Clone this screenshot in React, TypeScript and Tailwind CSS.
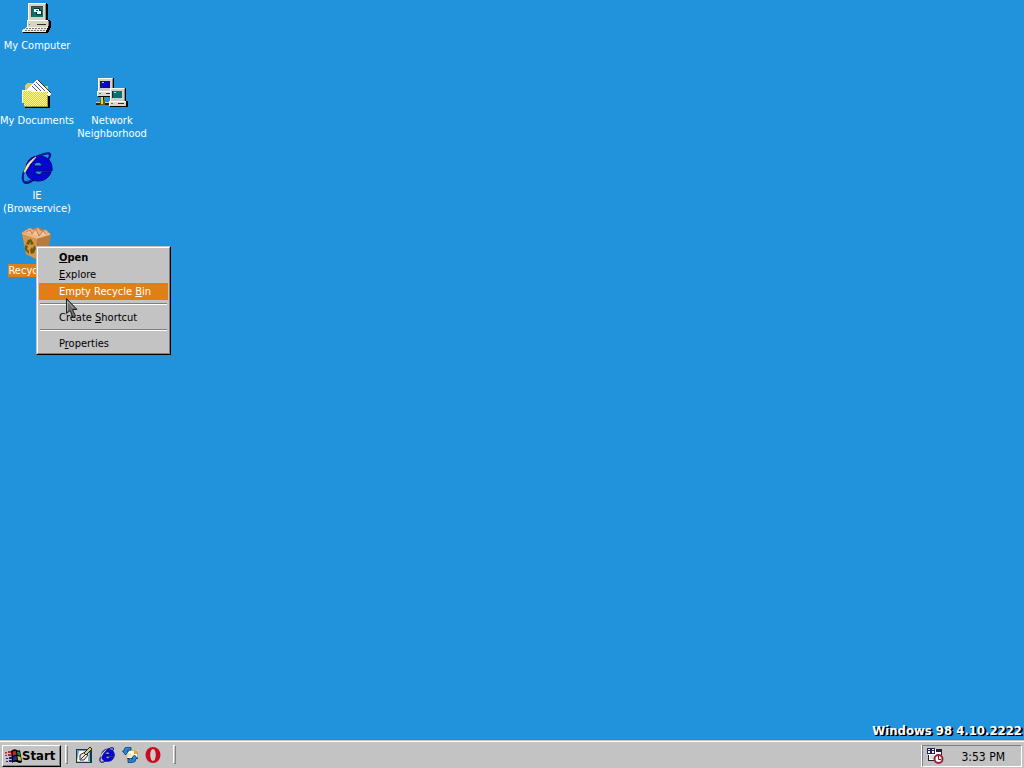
import type { ReactNode } from 'react';

const uiFont = "font-['DejaVu_Sans_Condensed','DejaVu_Sans',sans-serif]";

function ComputerIcon() {
  return (
    <svg viewBox="0 0 32 32" className="h-8 w-8" shapeRendering="crispEdges" aria-hidden="true">
      <path d="M8 1h17l2 1v16l-2 2H8z" fill="#000" />
      <path d="M7 1h17l1 1v16H7z" fill="#d8d4c0" />
      <path d="M7 1h17v1H8v16H7z" fill="#fff" />
      <path d="M24 2h1v16h-1z" fill="#908c80" />
      <path d="M10 4h12v11H10z" fill="#404040" />
      <path d="M11 5h11v10H11z" fill="#0a7070" />
      <path d="M13 6h6v4h-6zM15 8h6v5h-6z" fill="#003838" />
      <path d="M13 7h5v3h-5zM16 9h4v3h-4z" fill="#f0ffff" />
      <path d="M15 8h2v1h-2z" fill="#0a7070" />
      <path d="M6 18h22l2 2v5l-3 6H2v-3l4-3z" fill="#000" />
      <path d="M6 18h21v7H6z" fill="#d8d4c0" />
      <path d="M6 18h21v1H7v6H6z" fill="#fff" />
      <path d="M16 22h9v1h-9z" fill="#303030" />
      <path d="M8 22h1v1H8z" fill="#20a040" />
      <path d="M27 19h1v5h-1z" fill="#888" />
      <path d="M5 25h22v1h-1v2h-1v2H1v-2h1v-1h2z" fill="#f0efe8" />
      <path d="M5 26.5h20M4 28.5h20" stroke="#777" strokeDasharray="2 1" />
    </svg>
  );
}

function DocumentsIcon() {
  return (
    <svg viewBox="0 0 32 32" className="h-8 w-8" shapeRendering="crispEdges" aria-hidden="true">
      <defs>
        <pattern id="folder-dither" width="2" height="2" patternUnits="userSpaceOnUse">
          <path d="M0 0h2v2H0z" fill="#d8cc48" />
          <path d="M0 0h1v1H0zM1 1h1v1H1z" fill="#fcf890" />
        </pattern>
      </defs>
      <path d="M4 9l2-3h6l2 3h13v6H4z" fill="#d8cc70" />
      <path d="M7 13L17 2l13 14-2 4H7z" fill="#333" />
      <path d="M6 13L16 2l13 14v3H6z" fill="#fff" />
      <path d="M11 9l6 6M13 7l8 8M15 5l9 9" stroke="#4c4c9c" />
      <path d="M2 13h8l2 1h17v17H4z" fill="#000" />
      <path d="M1 13h9l2 1h15v16H3z" fill="url(#folder-dither)" />
      <path d="M1 13h9l2 1h15v1H11l-2-1H2v12H1z" fill="#fffcc8" />
      <path d="M26 15h1v15H3v-1h23z" fill="#a89838" />
      <path d="M27 14l3 3-2 2-2-1z" fill="#fff" />
    </svg>
  );
}

function SmallComputer({ x, y, screen }: { x: number; y: number; screen: string }) {
  return (
    <g transform={`translate(${x} ${y})`}>
      <path d="M2 0h14l1 1v12H2z" fill="#000" />
      <path d="M1 0h14l1 1v12H1z" fill="#d0d0c8" />
      <path d="M1 0h14v1H2v12H1z" fill="#fff" />
      <path d="M15 1h1v12h-1z" fill="#888" />
      <path d="M3 3h10v7H3z" fill="#222" />
      <path d="M4 3h9v7H4z" fill={screen} />
      <path d="M5 4h2v1H5z" fill="#a0e8f8" />
      <path d="M1 13h17l1 1v5H1z" fill="#000" />
      <path d="M0 13h17v5H0z" fill="#d8d8d0" />
      <path d="M0 13h17v1H1v4H0z" fill="#fff" />
      <path d="M2 15h2v1H2z" fill="#20a040" />
      <path d="M9 15h6v1H9z" fill="#333" />
    </g>
  );
}

function NetworkIcon() {
  return (
    <svg viewBox="0 0 32 32" className="h-8 w-8" shapeRendering="crispEdges" aria-hidden="true">
      <path d="M5 19h3v6H5zM0 26h13v2H0z" fill="#222" />
      <path d="M0 25h4v1H0zM8 25h5v1H8z" fill="#c8c8b8" />
      <path d="M4 23h5v5H4z" fill="#606018" />
      <path d="M5 20h2v7H5z" fill="#d8d840" />
      <SmallComputer x={1} y={1} screen="#0808c0" />
      <SmallComputer x={13} y={11} screen="#087070" />
    </svg>
  );
}

function BrowserIcon({ className }: { className: string }) {
  return (
    <svg viewBox="0 0 32 32" className={className} aria-hidden="true">
      <path d="M27 8Q33-1 23 2Q14 4 7 13Q-1 24 3 30Q6 33 14 27" fill="none" stroke="#081868" strokeWidth="2" />
      <path d="M18 4C9 4 5 10 5 17c0 8 5 12 12 12 6 0 11-3 13-9h-9c-1 4-7 3-7-1h17C32 10 27 4 18 4zm-5 10c0-5 8-5 8 0z" fill="#0606d4" stroke="#06066c" fillRule="evenodd" />
      <path d="M27 7Q31 0 23 2Q16 4 9 11Q0 21 2 28Q3 31 10 28" fill="none" stroke="#1414d8" strokeWidth="1" />
      <path d="M3 20Q6 10 15 5Q8 12 4 20z" fill="#fff" stroke="#e8dc50" strokeWidth="1" />
    </svg>
  );
}

function RecycleBinIcon() {
  return (
    <svg viewBox="0 0 32 32" className="h-8 w-8" aria-hidden="true">
      <path d="M1 5l7-4 4 1 4-2 5 2 5 1 4 5-4 20-11 4-10-5z" fill="#bc7b3d" />
      <path d="M2 5l7-4 3 2 5-2 3 3 5-1 4 4-11 5z" fill="#e8b087" />
      <path d="M5 5l4-2 2 4 4-5 3 7 4-5 4 4-7 2" fill="#f0c6a0" stroke="#b75e35" strokeWidth=".7" />
      <path d="M1 6l15 5-1 21-10-5z" fill="#d7944b" />
      <path d="M16 11l13-4-4 21-10 4z" fill="#b77b42" />
      <path d="M1 6l15 5 13-4" fill="none" stroke="#f0bd80" strokeWidth="1.5" />
      <path d="M7 13l3-1 3 5-3 1-1-3-1 3-3-1zM4 18l3 1-1 3 2 2v3l-4-4zM9 23l2-3 1 2 1-4 2 3-2 5-3 1z" fill="#665e0d" />
    </svg>
  );
}

function DesktopIcon({ label, children, selected = false }: { label: string; children: ReactNode; selected?: boolean }) {
  return (
    <button type="button" className="flex h-[75px] w-[75px] flex-col items-center gap-[5px] pt-0.5 pr-px text-[11px] leading-[13px] text-white">
      {children}
      <span className={selected ? 'bg-[#df8017] whitespace-nowrap' : 'whitespace-pre'}>{label}</span>
    </button>
  );
}

function MenuItem({ before = '', mark, after, bold = false, active = false }: { before?: string; mark: string; after: string; bold?: boolean; active?: boolean }) {
  return (
    <button
      type="button"
      role="menuitem"
      className={`block h-[17px] w-full pl-5 text-left leading-[17px] whitespace-nowrap ${bold ? 'font-bold' : ''} ${active ? 'bg-[#df8017] text-white' : 'text-black'}`}
    >
      {before}<span className="underline underline-offset-1">{mark}</span>{after}
    </button>
  );
}

function Separator() {
  return <div role="separator" className="mx-px mt-[3px] mb-1 h-0.5 border-t border-b border-t-[#808080] border-b-white" />;
}

function ContextMenu() {
  return (
    <div role="menu" className="absolute top-[246px] left-9 w-[135px] border border-t-[#c3c3c3] border-r-black border-b-black border-l-[#c3c3c3] text-[11px]">
      <div className="border border-t-white border-r-[#808080] border-b-[#808080] border-l-white bg-[#c3c3c3] p-px">
        <MenuItem mark="O" after="pen" bold />
        <MenuItem mark="E" after="xplore" />
        <MenuItem before="Empty Recycle " mark="B" after="in" active />
        <Separator />
        <MenuItem before="Create " mark="S" after="hortcut" />
        <Separator />
        <MenuItem before="P" mark="r" after="operties" />
      </div>
    </div>
  );
}

function Pointer() {
  return (
    <svg viewBox="0 0 13 21" className="pointer-events-none absolute top-[298px] left-[66px] h-[21px] w-[13px]" aria-hidden="true">
      <path d="M.5.5v15l3.5-3 3 7 2.5-1.5-3-6.5h4.5z" fill="#707070" stroke="#222" />
      <path d="M1.5 3v10M2 4l5 6" stroke="#aaa" />
    </svg>
  );
}

function WindowsLogo() {
  return (
    <svg viewBox="0 0 17 16" className="h-4 w-[17px] shrink-0" aria-hidden="true">
      <path d="M6 3Q9 0 12 2Q14 3 15 2L17 14Q15 16 12 14Q9 13 7 15z" fill="#000" />
      <path d="M7.500 4Q9 2.500 11 3l.5 4Q9.500 6.500 8 8z" fill="#c02030" />
      <path d="M12 3.500l2.500.2.700 4L12.500 7z" fill="#108848" />
      <path d="M8 9Q10 7.500 11.500 8l.5 4q-2-.5-3.500 1z" fill="#1830a8" />
      <path d="M12.500 8l3 .7.500 4-3-.5z" fill="#d8c830" />
      <path d="M0 4h2v1.500H0zM3 3h3v2H3zM0 7h2v1H0zM3 6h3v2H3z" fill="#b82840" />
      <path d="M1 10h2v1H1zM4 9h3v2H4zM1 13h2v1H1zM4 12h3v2H4z" fill="#202080" />
    </svg>
  );
}

function ShowDesktopIcon() {
  return (
    <svg viewBox="0 0 16 16" className="h-4 w-4" aria-hidden="true">
      <path d="M0 2h16v14H0z" fill="#183850" />
      <path d="M1 3h13v11H1z" fill="#68a0c0" />
      <path d="M3 4h10l-1 10H1z" fill="#f8f8e8" />
      <path d="M4 8l5-3 3 3-4 5H4z" fill="#e8e8e8" stroke="#333" />
      <path d="M8 6l6-6 2 2-6 6z" fill="#d8c878" stroke="#282820" />
      <path d="M5 12l4-4" stroke="#333" />
      <path d="M1 14.500h13" stroke="#d8d060" />
    </svg>
  );
}

function MailIcon() {
  return (
    <svg viewBox="0 0 16 16" className="h-4 w-4" aria-hidden="true">
      <path d="M5 3h11v8H5z" fill="#fffce8" />
      <path d="M5 11.500h11V4" fill="none" stroke="#605828" />
      <path d="M5 3.500h10M5 4v7" fill="none" stroke="#c8b868" />
      <path d="M6 9h5M6 7h3" stroke="#d8cc98" />
      <path d="M12 4h3v3h-3z" fill="#e8a828" />
      <path d="M9 .5H4Q2 .5 2 4H.5l3 4 3-4H5Q5 3 9 3z" fill="#2888e0" stroke="#083878" strokeWidth=".8" />
      <path d="M6 15.500h4q4 0 4-4h1.500L12.500 8l-3 3.500H11q0 1.500-3 1.500L6 11z" fill="#2888e0" stroke="#083878" strokeWidth=".8" />
    </svg>
  );
}

function OperaIcon() {
  return (
    <svg viewBox="0 0 16 16" className="h-4 w-4" aria-hidden="true">
      <ellipse cx="8" cy="8" rx="7.5" ry="8" fill="#c80c20" />
      <ellipse cx="8" cy="8" rx="2.8" ry="6" fill="#d0cccc" />
    </svg>
  );
}

function SchedulerIcon() {
  return (
    <svg viewBox="0 0 17 16" className="h-4 w-[17px]" aria-hidden="true">
      <path d="M1 1h14v12H1z" fill="#fff" />
      <path d="M9 1h6v3H9zM14 4h1v3h-1zM1 7h1v5h6v1H1z" fill="#222" />
      <path d="M3 8h4M3 10h4" stroke="#bbb" />
      <path d="M0 0h8v6H0z" fill="#202060" />
      <path d="M1 1h2v1H1zM5 1h2v1H5zM1 3h2v2H1zM5 3h2v2H5z" fill="#fff" />
      <circle cx="11.5" cy="11" r="4" fill="#fff" stroke="#a81838" strokeWidth="2" />
      <path d="M11.500 8v3.500H14" fill="none" stroke="#801020" />
    </svg>
  );
}

function Grip() {
  return <div className="h-[19px] w-[3px] border border-t-white border-r-[#808080] border-b-[#808080] border-l-white" />;
}

function Taskbar() {
  return (
    <footer className="flex h-7 items-center border-t border-[#c3c3c3] bg-[#c3c3c3] text-xs shadow-[inset_0_1px_0_#fff]">
      <button type="button" className="mt-0.5 ml-0.5 flex h-[22px] w-[59px] items-center border border-t-white border-r-black border-b-black border-l-white pl-0.5 text-[13px] font-bold text-black shadow-[inset_-1px_-1px_0_#808080]">
        <WindowsLogo />
        <span>Start</span>
      </button>
      <div className="ml-1 flex items-center">
        <Grip />
        <nav aria-label="Quick launch" className="mr-3 ml-2 flex items-center gap-[7px]">
          <button type="button" aria-label="Show desktop"><ShowDesktopIcon /></button>
          <button type="button" aria-label="Internet Explorer"><BrowserIcon className="h-4 w-4" /></button>
          <button type="button" aria-label="Mail"><MailIcon /></button>
          <button type="button" aria-label="Opera"><OperaIcon /></button>
        </nav>
        <Grip />
      </div>
      <div className="mt-0.5 mr-0.5 ml-auto flex h-[22px] items-center gap-[18px] border border-t-[#808080] border-r-white border-b-white border-l-[#808080] pr-4 pl-1 shadow-[-1px_0_0_#fff]">
        <SchedulerIcon />
        <time dateTime="15:53" className="pt-0.5">3:53 PM</time>
      </div>
    </footer>
  );
}

export default function App() {
  return (
    <div className={`relative flex h-screen flex-col overflow-hidden bg-[#2193dd] ${uiFont}`}>
      <main className="flex flex-1 flex-col justify-between">
        <div className="grid w-max grid-cols-2">
          <DesktopIcon label="My Computer"><ComputerIcon /></DesktopIcon>
          <span />
          <DesktopIcon label="My Documents"><DocumentsIcon /></DesktopIcon>
          <DesktopIcon label={'Network\nNeighborhood'}><NetworkIcon /></DesktopIcon>
          <DesktopIcon label={'IE\n(Browservice)'}><BrowserIcon className="h-8 w-8" /></DesktopIcon>
          <span />
          <DesktopIcon label="Recycle Bin" selected><RecycleBinIcon /></DesktopIcon>
        </div>
        <p className="self-end pr-0.5 pb-px text-[13px] leading-4 font-bold text-white [text-shadow:1px_1px_0_#000,2px_1px_0_#000]">Windows 98 4.10.2222</p>
      </main>
      <Taskbar />
      <ContextMenu />
      <Pointer />
    </div>
  );
}
